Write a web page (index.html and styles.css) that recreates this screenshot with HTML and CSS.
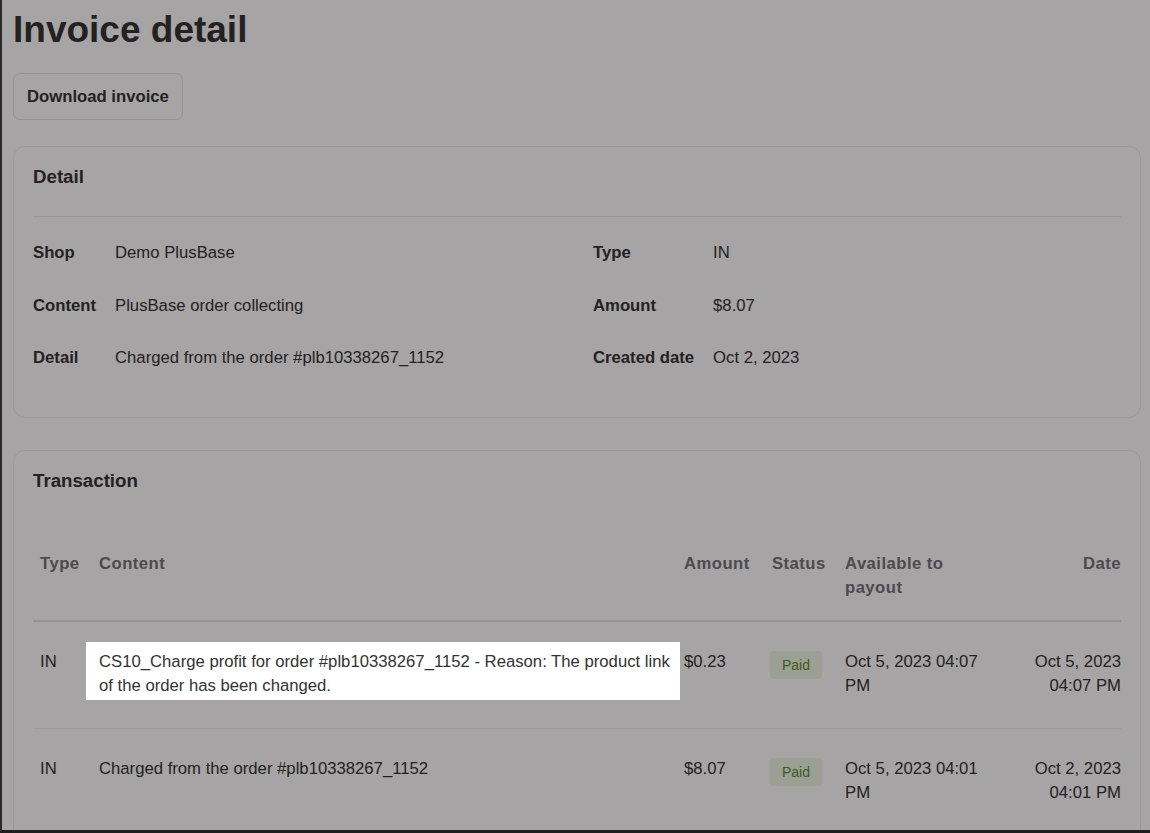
FILE: index.html
```html
<!DOCTYPE html>
<html>
<head>
    <title>Invoice detail</title>
    <link rel="stylesheet" href="styles.css">
</head>
<body>
    <div id="frame">
        <h1 class="page-title">Invoice detail</h1>
        <button class="button">Download invoice</button>

        <div class="card">
            <h2 class="card-title with-line">Detail</h2>
            <div class="info">
                <dl class="info-col">
                    <dt>Shop</dt><dd>Demo PlusBase</dd>
                    <dt>Content</dt><dd>PlusBase order collecting</dd>
                    <dt>Detail</dt><dd>Charged from the order #plb10338267_1152</dd>
                </dl>
                <dl class="info-col">
                    <dt>Type</dt><dd>IN</dd>
                    <dt>Amount</dt><dd>$8.07</dd>
                    <dt>Created date</dt><dd>Oct 2, 2023</dd>
                </dl>
            </div>
        </div>

        <div class="card">
            <h2 class="card-title">Transaction</h2>
            <table class="tx-table">
                <colgroup>
                    <col style="width: 59px">
                    <col style="width: 585px">
                    <col style="width: 88px">
                    <col style="width: 73px">
                    <col style="width: 155px">
                    <col>
                </colgroup>
                <thead>
                    <tr>
                        <th>Type</th>
                        <th>Content</th>
                        <th>Amount</th>
                        <th>Status</th>
                        <th>Available to payout</th>
                        <th class="right">Date</th>
                    </tr>
                </thead>
                <tbody>
                    <tr>
                        <td>IN</td>
                        <td><div class="spotlight">CS10_Charge profit for order #plb10338267_1152 - Reason: The product link of the order has been changed.</div></td>
                        <td>$0.23</td>
                        <td><span class="badge">Paid</span></td>
                        <td>Oct 5, 2023 04:07 PM</td>
                        <td class="right">Oct 5, 2023 04:07 PM</td>
                    </tr>
                    <tr>
                        <td>IN</td>
                        <td>Charged from the order #plb10338267_1152</td>
                        <td>$8.07</td>
                        <td><span class="badge">Paid</span></td>
                        <td>Oct 5, 2023 04:01 PM</td>
                        <td class="right">Oct 2, 2023 04:01 PM</td>
                    </tr>
                </tbody>
            </table>
        </div>
    </div>
</body>
</html>
```

FILE: styles.css
```css
html, body {
    margin: 0;
    padding: 0;
}

body {
    background-color: #fff;
    font-family: "Liberation Sans", Arial, sans-serif;
    font-size: 16.7px;
    color: #333;
}

#frame {
    height: 100vh;
    box-sizing: border-box;
    overflow: hidden;
    border-left: 2px solid #2b2b2b;
    border-bottom: 3px solid #1f1f1f;
    padding: 8px 9px 0 11px;
}

.page-title {
    margin: 0;
    font-size: 37px;
    line-height: 44px;
    font-weight: bold;
    color: #333;
}

.button {
    display: inline-block;
    margin-top: 21px;
    padding: 12px 13px;
    font-family: inherit;
    font-size: 16.7px;
    line-height: 21px;
    font-weight: bold;
    color: #333;
    background-color: #fff;
    border: 1px solid #e4e2e6;
    border-radius: 7px;
    cursor: pointer;
}

.card {
    margin-top: 26px;
    padding: 19px;
    border: 1px solid #efedf1;
    border-radius: 12px;
}

.card + .card {
    margin-top: 32px;
}

.card-title {
    margin: 0;
    font-size: 18.7px;
    line-height: 22px;
    font-weight: bold;
    color: #333;
}

.card-title.with-line {
    padding-bottom: 28px;
    border-bottom: 1px solid #eceaf0;
}

.info {
    display: grid;
    grid-template-columns: 1fr 1fr;
    column-gap: 32px;
    margin: 10px 0 13px;
}

.info-col {
    display: grid;
    grid-template-columns: max-content 1fr;
    column-gap: 19px;
    margin: 0;
}

.info-col dt,
.info-col dd {
    margin: 0;
    padding: 14px 0;
    line-height: 24.5px;
}

.info-col dt {
    font-weight: bold;
}

.tx-table {
    width: 100%;
    margin-top: 60px;
    border-collapse: collapse;
    table-layout: fixed;
}

.tx-table th {
    padding: 0 3px 20px 7px;
    text-align: left;
    vertical-align: top;
    font-weight: bold;
    line-height: 24px;
    letter-spacing: 0.45px;
    color: #74737a;
    border-bottom: 2px solid #e6e3f0;
}

.tx-table td {
    padding: 28px 3px 30px 7px;
    vertical-align: top;
    line-height: 24px;
    border-bottom: 1px solid #efedf3;
}

.tx-table .right {
    text-align: right;
    padding-right: 0;
}

.badge {
    display: inline-block;
    margin: 1px 0 0 -2px;
    padding: 0 12px;
    font-size: 14px;
    line-height: 28px;
    color: #5e8c2f;
    background-color: #f0f8e6;
    border-radius: 4px;
}

/* tour highlight: everything around it is dimmed by the shadow */
.spotlight {
    position: relative;
    z-index: 2;
    margin: -8px -6px -2px -13px;
    padding: 8px 6px 2px 13px;
    background-color: #fff;
    box-shadow: 0 0 0 3000px rgba(8, 4, 4, 0.36);
}
```
